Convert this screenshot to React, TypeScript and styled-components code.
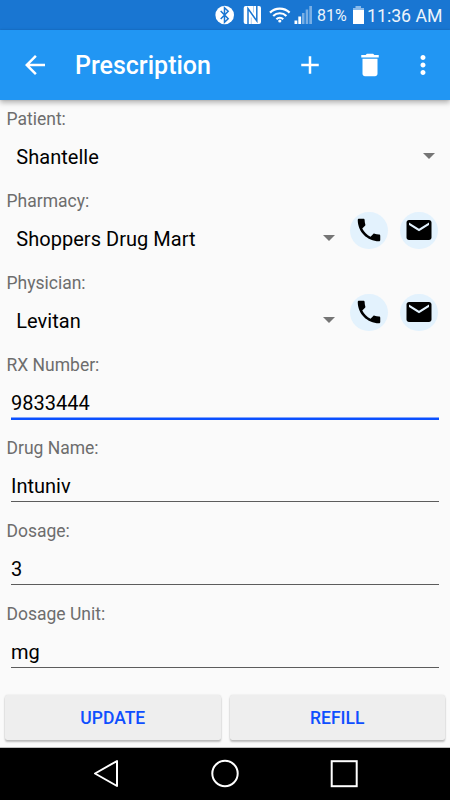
import React from "react";
import styled, { createGlobalStyle } from "styled-components";

const GlobalStyle = createGlobalStyle`
  * { box-sizing: border-box; }
  body { margin: 0; background: #fafafa; font-family: Roboto, sans-serif; }
  svg { display: block; flex: none; }
`;

const Screen = styled.div`
  width: 450px;
  height: 800px;
  display: flex;
  flex-direction: column;
  background: #fafafa;
  overflow: hidden;
`;

const StatusBar = styled.div`
  height: 30px;
  flex: none;
  background: #1976d2;
  display: flex;
  align-items: center;
  justify-content: flex-end;
  padding: 0 9px 0 0;
  color: #fff;
`;

const StatusIcons = styled.div`
  display: flex;
  align-items: center;
`;

const StatusText = styled.span<{ $size: number; $width: number }>`
  font-size: ${(p) => p.$size}px;
  width: ${(p) => p.$width}px;
  line-height: 30px;
  white-space: nowrap;
  padding-top: 1px;
  opacity: 0.92;
`;

const Toolbar = styled.header`
  height: 70px;
  flex: none;
  background: #2196f3;
  display: flex;
  align-items: center;
  padding: 0 5px 0 20px;
  box-shadow: 0 3px 5px rgba(0, 0, 0, 0.26), 0 0 2px rgba(0, 0, 0, 0.15);
  z-index: 1;
`;

const Title = styled.h1`
  margin: 0 0 0 25px;
  flex: 1;
  color: #fff;
  font-size: 25px;
  font-weight: 500;
  line-height: 30px;
  padding-top: 2px;
`;

const ToolButton = styled.button<{ $width?: number }>`
  width: ${(p) => p.$width ?? 30}px;
  height: 60px;
  padding: 0;
  border: 0;
  background: none;
  display: flex;
  align-items: center;
  justify-content: center;
`;

const Form = styled.main`
  flex: 1;
  padding-top: 9px;
`;

const Group = styled.section<{ $height: number }>`
  height: ${(p) => p.$height}px;
  display: flex;
`;

const GroupMain = styled.div`
  flex: 1;
  min-width: 0;
`;

const Label = styled.div`
  height: 21px;
  padding-left: 6.5px;
  font-size: 17.5px;
  line-height: 20px;
  color: #6d6d6d;
`;

const Select = styled.div`
  height: 54px;
  padding: 0 15px 0 16.3px;
  display: flex;
  align-items: center;
  justify-content: space-between;
  font-size: 20px;
  letter-spacing: 0.03px;
  color: #000;
`;

const Caret = styled.i`
  width: 0;
  height: 0;
  margin-bottom: 2px;
  border: 6.25px solid transparent;
  border-top: 6px solid #757575;
  border-bottom: 0;
`;

const Actions = styled.div`
  width: 100px;
  padding-top: 20.5px;
  display: flex;
  gap: 12.5px;
`;

const RoundButton = styled.button`
  width: 37.5px;
  height: 37.5px;
  padding: 0;
  border: 0;
  border-radius: 50%;
  background: #e3f2fd;
  display: flex;
  align-items: center;
  justify-content: center;
`;

const TextField = styled.div<{ $focused?: boolean }>`
  margin: 0 11.5px 0 11px;
  height: ${(p) => (p.$focused ? 44 : 43)}px;
  border-bottom: ${(p) => (p.$focused ? "2px solid #0a50ff" : "1px solid #5c5c5c")};
  box-shadow: ${(p) => (p.$focused ? "inset 0 -1px rgba(10, 80, 255, 0.5)" : "none")};
  font-size: 20px;
  line-height: 24px;
  padding-top: 15px;
  color: #000;
`;

const Footer = styled.footer`
  height: 61px;
  flex: none;
  padding: 8px 5px 7px;
  display: flex;
  gap: 9px;
  border-bottom: 1px solid #bdbdbd;
`;

const Button = styled.button`
  flex: 1;
  height: 45px;
  padding: 1px 0 0;
  border: 0;
  border-radius: 2.5px;
  background: #eeeeee;
  box-shadow: 0 2px 2px rgba(0, 0, 0, 0.24), 0 0 2px rgba(0, 0, 0, 0.12);
  color: #0f4fff;
  font: 500 17.5px/20px Roboto, sans-serif;
`;

const NavBar = styled.nav`
  height: 52px;
  flex: none;
  background: #000;
  display: flex;
  justify-content: center;
  align-items: center;
  gap: 89px;
`;

const PATHS = {
  back: "M20 11H7.83l5.59-5.59L12 4l-8 8 8 8 1.41-1.41L7.83 13H20v-2z",
  add: "M19 13h-6v6h-2v-6H5v-2h6V5h2v6h6v2z",
  trash: "M6 19c0 1.1.9 2 2 2h8c1.100 0 2-.9 2-2V7H6v12zM19 4h-3.500l-1-1h-5l-1 1H5v2h14V4z",
  more: "M12 8c1.100 0 2-.9 2-2s-.9-2-2-2-2 .9-2 2 .9 2 2 2zm0 2c-1.100 0-2 .9-2 2s.9 2 2 2 2-.9 2-2-.9-2-2-2zm0 6c-1.100 0-2 .9-2 2s.9 2 2 2 2-.9 2-2-.9-2-2-2z",
  phone:
    "M6.620 10.790c1.440 2.830 3.760 5.140 6.590 6.590l2.200-2.200c.27-.27.67-.36 1.020-.24 1.120.37 2.330.57 3.570.57.55 0 1 .45 1 1V20c0 .55-.45 1-1 1-9.390 0-17-7.610-17-17 0-.55.45-1 1-1h3.500c.55 0 1 .45 1 1 0 1.250.2 2.450.57 3.570.11.35.03.74-.25 1.020l-2.200 2.200z",
  mail: "M20 4H4c-1.100 0-1.990.9-1.990 2L2 18c0 1.100.9 2 2 2h16c1.100 0 2-.9 2-2V6c0-1.100-.9-2-2-2zm0 4l-8 5-8-5V6l8 5 8-5v2z",
};

function Icon({ name, color = "#fff" }: { name: keyof typeof PATHS; color?: string }) {
  return (
    <svg width="30" height="30" viewBox="0 0 24 24" fill={color}>
      <path d={PATHS[name]} />
    </svg>
  );
}

function StatusGlyphs() {
  return (
    <svg width="102" height="30" viewBox="215 0 102 30">
      <circle cx="224.700" cy="15" r="9.300" fill="#fff" />
      <path d="M220.700 11l7.500 7.700-3.700 3.500V7.800l3.700 3.500-7.500 7.700" fill="none" stroke="#1976d2" strokeWidth="1.500" />
      <rect x="243.700" y="6" width="17.300" height="18" rx="2" fill="#fff" />
      <path d="M248 24V8.500L256.800 21V6" fill="none" stroke="#1976d2" strokeWidth="1.500" />
      <path d="M251.300 24v-6.500M253.500 6v6.500" fill="none" stroke="#1976d2" strokeWidth="1" opacity=".35" />
      <g fill="none" stroke="#fff" strokeWidth="2.200">
        <path d="M270 12.600a14 14 0 0 1 19.600 0" />
        <path d="M273.200 16a9.300 9.300 0 0 1 13.200 0" />
        <path d="M276.400 19.200a4.900 4.900 0 0 1 6.800 0" />
      </g>
      <circle cx="279.800" cy="21" r="1.600" fill="#fff" />
      <path d="M294.500 20.500h2.800V24h-2.800zM298.300 16.500h2.800V24h-2.800z" fill="#fff" />
      <path d="M302 13h2.500v11H302zM305.700 9.500h2.500V24h-2.500zM309.300 6h2.700v18h-2.700z" fill="#fff" opacity=".42" />
    </svg>
  );
}

function Battery() {
  return (
    <svg width="15" height="30" viewBox="352 0 15 30">
      <path d="M355.500 6h5.500v2h3v2h-11V8h2.500z" fill="#8abaea" />
      <path d="M353 10h11v14h-11z" fill="#fff" />
    </svg>
  );
}

function SelectGroup({ label, value, contact }: { label: string; value: string; contact?: boolean }) {
  return (
    <Group $height={82}>
      <GroupMain>
        <Label>{label}</Label>
        <Select>
          {value}
          <Caret />
        </Select>
      </GroupMain>
      {contact && (
        <Actions>
          <RoundButton aria-label="Call">
            <Icon name="phone" color="#000" />
          </RoundButton>
          <RoundButton aria-label="Email">
            <Icon name="mail" color="#000" />
          </RoundButton>
        </Actions>
      )}
    </Group>
  );
}

function TextGroup({ label, value, focused }: { label: string; value: string; focused?: boolean }) {
  return (
    <Group $height={83}>
      <GroupMain>
        <Label>{label}</Label>
        <TextField $focused={focused}>{value}</TextField>
      </GroupMain>
    </Group>
  );
}

export default function App() {
  return (
    <Screen>
      <GlobalStyle />
      <StatusBar>
        <StatusIcons>
          <StatusGlyphs />
        </StatusIcons>
        <StatusText $size={16} $width={35}>81%</StatusText>
        <Battery />
        <StatusText $size={17.700} $width={74}>11:36 AM</StatusText>
      </StatusBar>
      <Toolbar>
        <ToolButton aria-label="Back"><Icon name="back" /></ToolButton>
        <Title>Prescription</Title>
        <ToolButton $width={60} aria-label="Add"><Icon name="add" /></ToolButton>
        <ToolButton $width={60} aria-label="Delete"><Icon name="trash" /></ToolButton>
        <ToolButton $width={45} aria-label="More"><Icon name="more" /></ToolButton>
      </Toolbar>
      <Form>
        <SelectGroup label="Patient:" value="Shantelle" />
        <SelectGroup label="Pharmacy:" value="Shoppers Drug Mart" contact />
        <SelectGroup label="Physician:" value="Levitan" contact />
        <TextGroup label="RX Number:" value="9833444" focused />
        <TextGroup label="Drug Name:" value="Intuniv" />
        <TextGroup label="Dosage:" value="3" />
        <TextGroup label="Dosage Unit:" value="mg" />
      </Form>
      <Footer>
        <Button>UPDATE</Button>
        <Button>REFILL</Button>
      </Footer>
      <NavBar>
        <svg width="30" height="30" viewBox="0 0 30 30" fill="none" stroke="#fff" strokeWidth="2">
          <path d="M4 14.500L26 2v25z" strokeLinejoin="round" />
        </svg>
        <svg width="30" height="30" viewBox="0 0 30 30" fill="none" stroke="#fff" strokeWidth="2">
          <circle cx="15" cy="14.500" r="12.700" />
        </svg>
        <svg width="30" height="30" viewBox="0 0 30 30" fill="none" stroke="#fff" strokeWidth="2">
          <rect x="2.700" y="2.200" width="25" height="25" />
        </svg>
      </NavBar>
    </Screen>
  );
}
